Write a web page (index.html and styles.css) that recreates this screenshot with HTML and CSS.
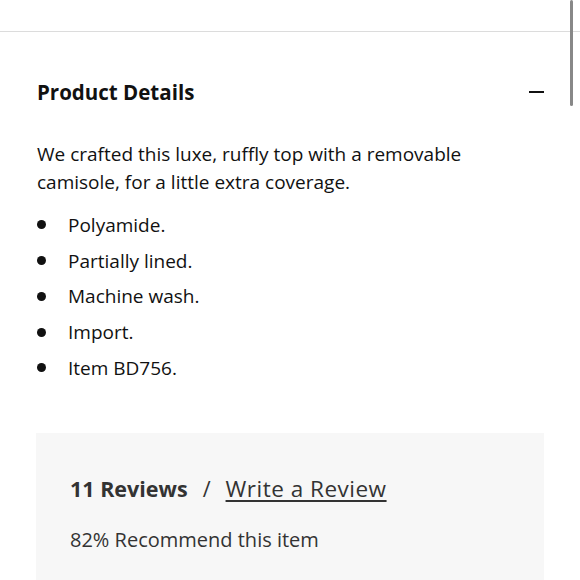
FILE: index.html
```html
<!DOCTYPE html>
<html lang="en">
<head>
<meta charset="utf-8">
<link rel="stylesheet" href="styles.css">
</head>
<body>
<div class="page">
  <div class="topbar"></div>
  <section class="details">
    <div class="details-head">
      <h2 class="details-title">Product Details</h2>
      <span class="collapse" aria-label="Collapse"></span>
    </div>
    <p class="details-desc">We crafted this luxe, ruffly top with a removable camisole, for a little extra coverage.</p>
    <ul class="details-list">
      <li>Polyamide.</li>
      <li>Partially lined.</li>
      <li>Machine wash.</li>
      <li>Import.</li>
      <li>Item BD756.</li>
    </ul>
  </section>
  <section class="reviews">
    <div class="reviews-head">
      <span class="reviews-count">11 Reviews</span>
      <span class="reviews-sep">/</span>
      <a class="reviews-write" href="#">Write a Review</a>
    </div>
    <p class="reviews-rec">82% Recommend this item</p>
  </section>
  <div class="scrollbar"></div>
</div>
</body>
</html>
```

FILE: styles.css
```css
html, body {
  margin: 0;
  padding: 0;
  background: #fff;
}
body {
  font-family: "Open Sans", "Noto Sans", sans-serif;
  color: #111;
  width: 580px;
  height: 580px;
  overflow: hidden;
}
.page {
  position: relative;
  height: 580px;
}
.topbar {
  height: 31px;
  border-bottom: 1px solid #dcdcdc;
}
.details {
  padding: 0 36px 0 37px;
}
.details-head {
  display: flex;
  align-items: center;
  justify-content: space-between;
  height: 40px;
  margin-top: 40px;
}
.details-title {
  margin: 0;
  font-size: 20.5px;
  font-weight: 700;
  color: #111;
}
.collapse {
  display: block;
  width: 15px;
  height: 2px;
  background: #111;
}
.details-desc {
  margin: 28px 0 0;
  font-size: 19px;
  line-height: 28px;
}
.details-list {
  list-style: none;
  margin: 11px 0 0;
  padding: 0;
  font-size: 19px;
}
.details-list li {
  display: flex;
  align-items: center;
  height: 35.75px;
}
.details-list li::before {
  content: "";
  width: 9px;
  height: 9px;
  border-radius: 50%;
  background: #111;
  margin: 0 22px 0 0;
  flex: none;
}
.reviews {
  margin: 47px 36px 0 36px;
  background: #f7f7f7;
  padding: 40px 34px 0;
  height: 107px;
}
.reviews-head {
  display: flex;
  align-items: baseline;
  color: #333;
}
.reviews-count {
  font-size: 21.5px;
  font-weight: 700;
}
.reviews-sep {
  font-size: 21.5px;
  margin: 0 15px;
}
.reviews-write {
  font-size: 22.5px;
  letter-spacing: 0.5px;
  color: #333;
  text-decoration: underline;
  text-decoration-thickness: 1.5px;
  text-underline-offset: 3px;
}
.reviews-rec {
  margin: 22px 0 0;
  font-size: 20px;
  color: #333;
}
.scrollbar {
  position: absolute;
  top: 0;
  right: 7px;
  width: 3px;
  height: 106px;
  background: #888;
  border-radius: 2px;
}
```
